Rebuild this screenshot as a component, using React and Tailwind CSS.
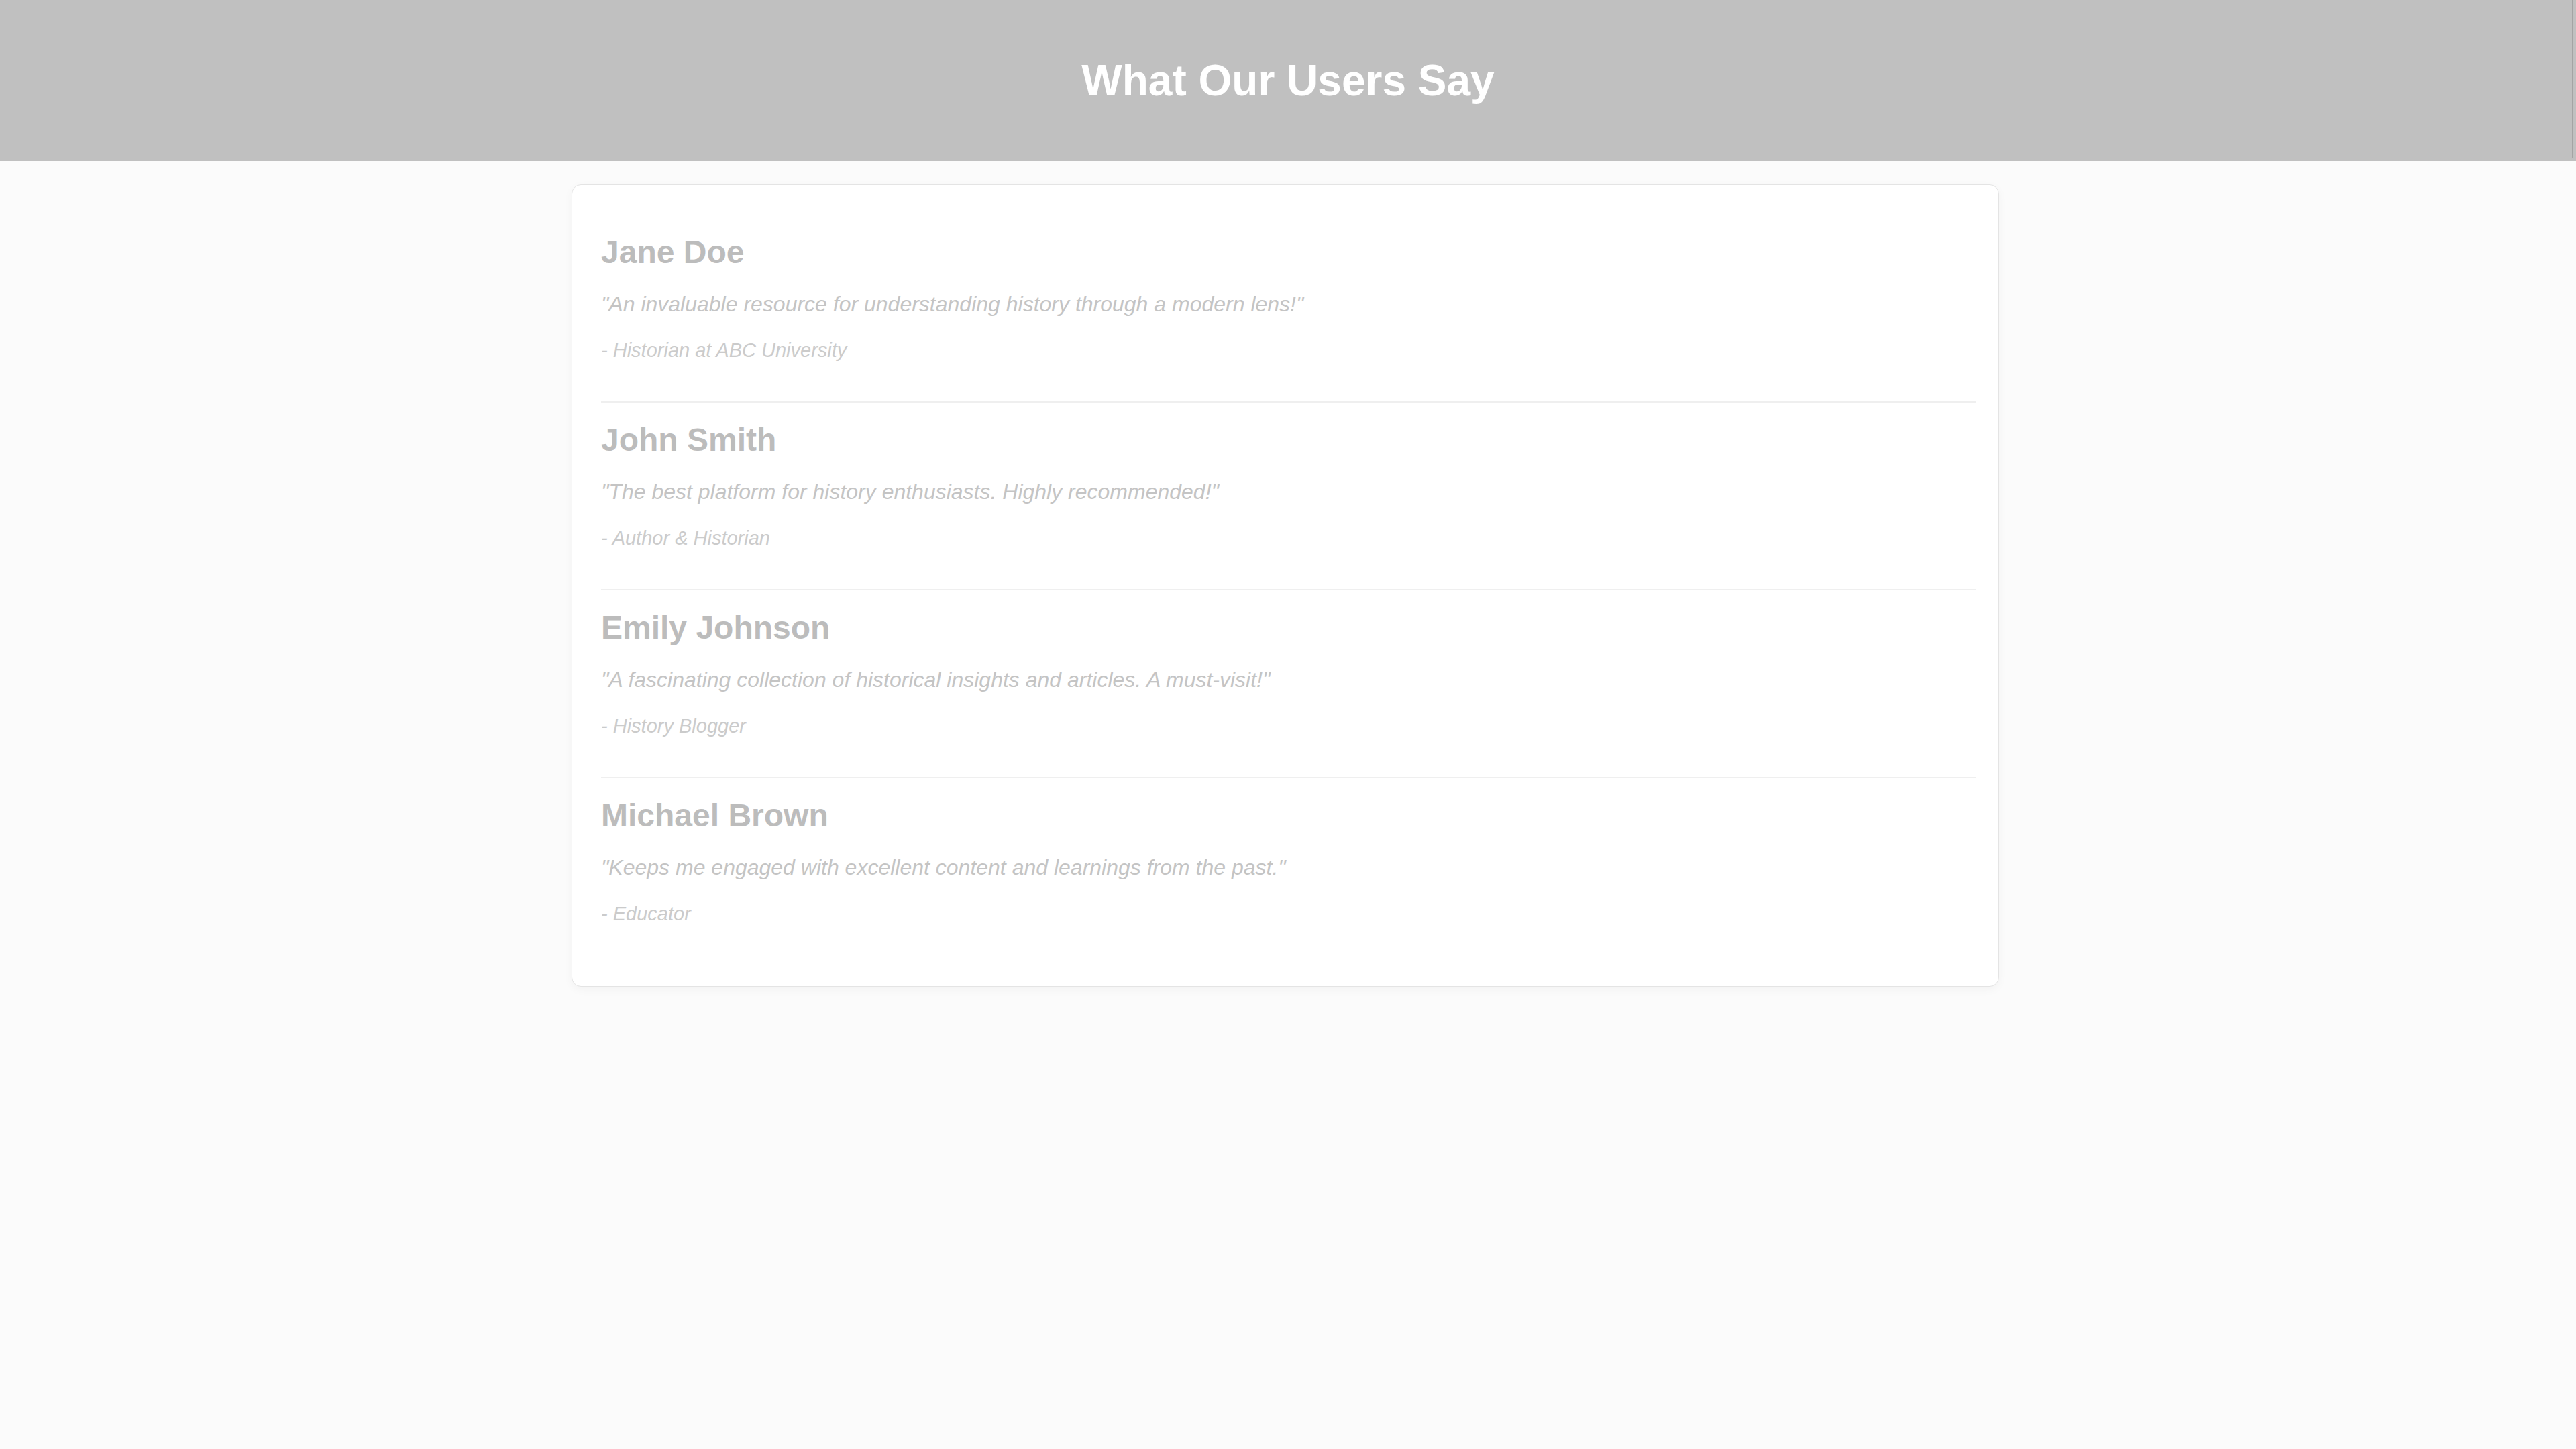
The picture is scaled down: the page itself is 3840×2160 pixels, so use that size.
import React from "react";

const items = [
  {
    name: "Jane Doe",
    quote: "\"An invaluable resource for understanding history through a modern lens!\"",
    role: "- Historian at ABC University",
  },
  {
    name: "John Smith",
    quote: "\"The best platform for history enthusiasts. Highly recommended!\"",
    role: "- Author & Historian",
  },
  {
    name: "Emily Johnson",
    quote: "\"A fascinating collection of historical insights and articles. A must-visit!\"",
    role: "- History Blogger",
  },
  {
    name: "Michael Brown",
    quote: "\"Keeps me engaged with excellent content and learnings from the past.\"",
    role: "- Educator",
  },
];

export default function App() {
  return (
    <div className="min-h-[2160px] w-full bg-[#fbfbfb] font-['Liberation_Sans',Arial,sans-serif]">
      <header className="relative flex h-[240px] items-center justify-center bg-[#c0c0c0]">
        <h1 className="text-[64px] font-bold leading-[64px] text-white">What Our Users Say</h1>
        <div className="absolute right-[5px] top-0 h-[235px] w-[1px] bg-[#a4a4a4]" />
      </header>
      <main className="pt-[35px]">
        <section className="ml-[852px] w-[2128px] rounded-[14px] border border-[#e4e4e4] bg-white pb-[32px] pl-[43px] pr-[34px] pt-[44px] shadow-[0_4px_14px_rgba(0,0,0,0.04)]">
          {items.map((it, i) => (
            <div
              key={it.name}
              className={
                i < items.length - 1
                  ? "border-b-2 border-[#efefef] pb-[55px] pt-[27px]"
                  : "pb-[55px] pt-[27px]"
              }
            >
              <h2 className="text-[48px] font-bold leading-[58px] text-[#bcbcbc]">{it.name}</h2>
              <p className="mt-[24px] text-[32px] italic leading-[48px] text-[#c4c4c4]">{it.quote}</p>
              <p className="mt-[24px] text-[29px] italic leading-[42px] text-[#cbcbcb]">{it.role}</p>
            </div>
          ))}
        </section>
      </main>
    </div>
  );
}
